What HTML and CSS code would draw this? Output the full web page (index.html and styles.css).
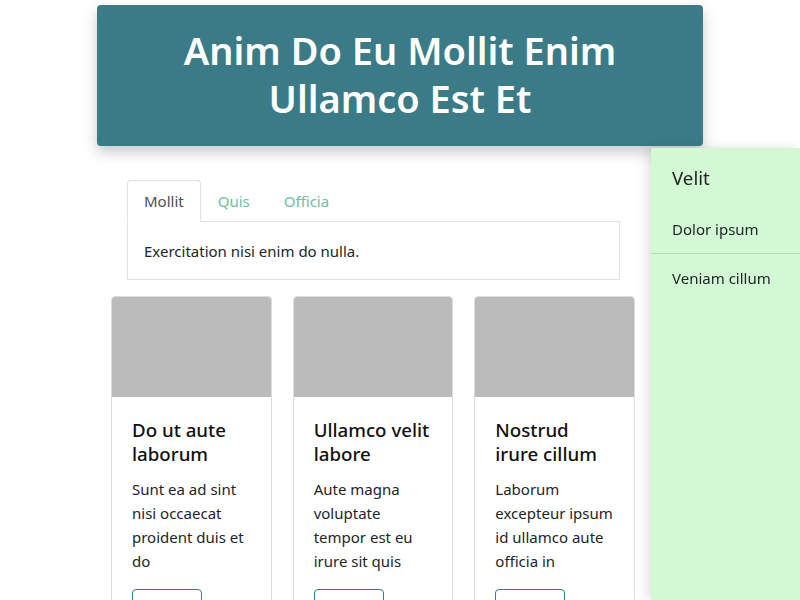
FILE: index.html
```html
<!DOCTYPE html>
<html lang="en">
<head>
<meta charset="utf-8">
<title>Anim Do Eu Mollit Enim</title>
<link rel="stylesheet" href="styles.css">
</head>
<body>
  <header class="hero">
    <h1 class="hero-title">Anim Do Eu Mollit Enim Ullamco Est Et</h1>
  </header>

  <main class="main">
    <section class="tabs">
      <nav class="tab-nav">
        <a class="tab tab-active">Mollit</a>
        <a class="tab">Quis</a>
        <a class="tab">Officia</a>
      </nav>
      <div class="tab-panel">Exercitation nisi enim do nulla.</div>
    </section>

    <section class="cards">
      <article class="card">
        <div class="card-img"></div>
        <div class="card-body">
          <h2 class="card-title">Do ut aute laborum</h2>
          <p class="card-text">Sunt ea ad sint nisi occaecat proident duis et do</p>
          <button class="card-btn">Enim</button>
        </div>
      </article>
      <article class="card">
        <div class="card-img"></div>
        <div class="card-body">
          <h2 class="card-title">Ullamco velit labore</h2>
          <p class="card-text">Aute magna voluptate tempor est eu irure sit quis</p>
          <button class="card-btn">Velit</button>
        </div>
      </article>
      <article class="card">
        <div class="card-img"></div>
        <div class="card-body">
          <h2 class="card-title">Nostrud irure cillum</h2>
          <p class="card-text">Laborum excepteur ipsum id ullamco aute officia in</p>
          <button class="card-btn">Esse</button>
        </div>
      </article>
    </section>
  </main>

  <aside class="drawer">
    <div class="drawer-title">Velit</div>
    <ul class="drawer-list">
      <li class="drawer-item">Dolor ipsum</li>
      <li class="drawer-item">Veniam cillum</li>
    </ul>
  </aside>
</body>
</html>
```

FILE: styles.css
```css
* { box-sizing: border-box; }

html, body {
  margin: 0;
  padding: 0;
  background: #ffffff;
  color: #212529;
  font-family: "Noto Sans", "Open Sans", sans-serif;
  font-size: 15px;
  line-height: 1.6;
  overflow: hidden;
  height: 600px;
}

.hero {
  width: 606px;
  margin: 5px auto 0;
  padding: 21px 40px 24px;
  background: #3a7b87;
  border-radius: 4px;
  box-shadow: 0 6px 14px rgba(0, 0, 0, 0.22);
}

.hero-title {
  margin: 0;
  color: #ffffff;
  font-size: 38px;
  font-weight: 600;
  line-height: 48px;
  text-align: center;
}

.main {
  width: 524px;
  margin: 34px 0 0 111px;
}

.tabs {
  margin: 0 15px 0 16px;
}

.tab-nav {
  display: flex;
  border-bottom: 1px solid #dee2e6;
}

.tab {
  display: block;
  padding: 8px 16px;
  margin-bottom: -1px;
  border: 1px solid transparent;
  border-radius: 4px 4px 0 0;
  color: #6cbea6;
  line-height: 24px;
  cursor: pointer;
}

.tab-active {
  color: #495057;
  background: #ffffff;
  border-color: #dee2e6 #dee2e6 #ffffff;
}

.tab-panel {
  padding: 17px 16px 16px;
  border: 1px solid #dee2e6;
  border-top: 0;
  line-height: 24px;
}

.cards {
  display: grid;
  grid-template-columns: repeat(3, 1fr);
  gap: 21px;
  margin-top: 16px;
}

.card {
  border: 1px solid #dcdcdc;
  border-radius: 4px;
  overflow: hidden;
  background: #ffffff;
}

.card-img {
  height: 100px;
  background: #bbbbbb;
}

.card-body {
  padding: 21px 20px 20px;
}

.card-title {
  margin: 0 0 11px;
  font-size: 18.7px;
  font-weight: 500;
  line-height: 24px;
  color: #111111;
}

.card-text {
  margin: 0 0 16px;
  font-size: 15px;
  line-height: 24px;
}

.card-btn {
  width: 70px;
  height: 38px;
  border: 1px solid #3a7b87;
  border-radius: 4px;
  background: #ffffff;
  color: #3a7b87;
  font: inherit;
}

.drawer {
  position: fixed;
  top: 148px;
  right: 0;
  bottom: 0;
  width: 149px;
  background: #d2f9d3;
  box-shadow: -4px 0 10px rgba(0, 0, 0, 0.12);
}

.drawer-title {
  padding: 16px 21px 14px;
  font-size: 18.7px;
  line-height: 27px;
}

.drawer-list {
  list-style: none;
  margin: 0;
  padding: 0;
}

.drawer-item {
  padding: 12px 21px;
  font-size: 15px;
  line-height: 24px;
  border-bottom: 1px solid #b4dcb8;
}

.drawer-item:last-child {
  border-bottom: 0;
}
```
